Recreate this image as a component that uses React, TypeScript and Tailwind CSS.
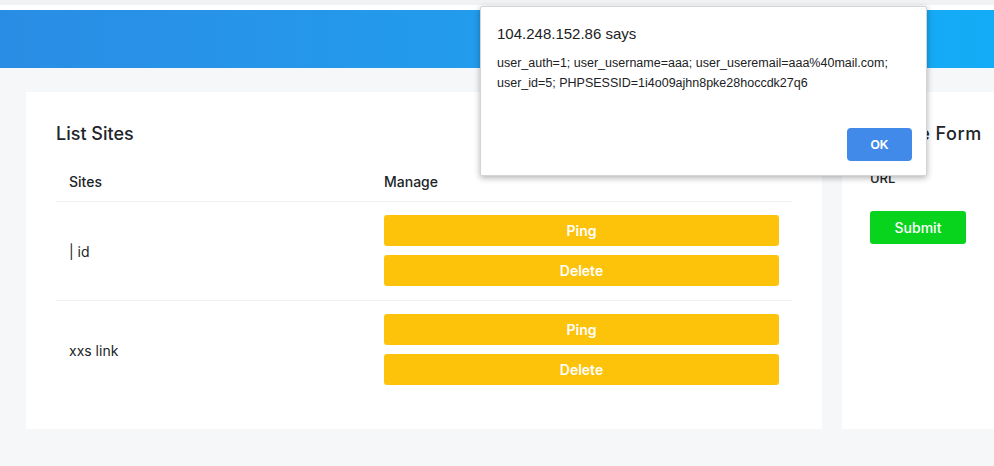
import React from "react";

const rows = [
  { name: "| id" },
  { name: "xxs link" },
];

export default function App() {
  return (
    <div className="relative h-[466px] w-[994px] overflow-hidden bg-[#f6f7f9] font-['Inter',sans-serif] text-[#212529]">

      {/* Top strip */}

      <div className="h-[5px] bg-[#f1f2f4]" />
      <div className="h-[5px] bg-white" />
      <div className="h-[58px] bg-gradient-to-r from-[#2a8de5] to-[#13acf6]" />

      {/* Content */}

      <div className="flex items-start gap-5 pl-[26px] pt-6">

        <div className="w-[796px] shrink-0 bg-white px-[30px] pb-[30px] pt-[30px]">

          <h2 className="text-[18px] font-medium leading-[24px] text-[#212529]">
            List Sites
          </h2>

          <div className="mt-[16px]">

            <div className="flex h-10 items-center border-b border-[#eef0f2] text-[14px] font-medium">
              <div className="w-[315px] pl-[13px]">Sites</div>
              <div className="pl-[13px]">Manage</div>
            </div>

            {rows.map((row, i) => (
              <div
                key={i}
                className={`flex items-center ${i === 0 ? "border-b border-[#eef0f2]" : ""}`}
              >
                <div className="w-[315px] pl-[13px] text-[14px]">{row.name}</div>
                <div className="flex flex-1 flex-col gap-[9px] px-[13px] pb-[14px] pt-[13px]">
                  <ActionButton label="Ping" />
                  <ActionButton label="Delete" />
                </div>
              </div>
            ))}

          </div>

        </div>

        <div className="h-[337px] w-[300px] shrink-0 bg-white px-[28px] pt-[30px]">

          <h2 className="text-[18px] font-medium leading-[24px] tracking-[0.5px]">
            Create Form
          </h2>

          <p className="mt-[23px] text-[13px] font-medium">URL</p>

          <button className="mt-[22px] h-[33px] w-[96px] rounded-[3px] bg-[#08d41e] text-[14px] font-medium text-white">
            Submit
          </button>

        </div>

      </div>

      {/* Alert dialog */}

      <div className="absolute left-[480px] top-[6px] h-[170px] w-[447px] rounded-[2px] border border-[#d4d4d4] bg-white shadow-[0_2px_6px_rgba(0,0,0,0.3)] font-['Liberation_Sans',sans-serif]">

        <p className="ml-[16px] mt-[17px] text-[15px] leading-[20px] text-[#202124]">
          104.248.152.86 says
        </p>

        <p className="ml-[16px] mt-[9px] w-[410px] text-[12.5px] leading-[20px] text-[#202124]">
          user_auth=1; user_username=aaa; user_useremail=aaa%40mail.com;
          user_id=5; PHPSESSID=1i4o09ajhn8pke28hoccdk27q6
        </p>

        <button className="absolute left-[366px] top-[121px] h-[33px] w-[65px] rounded-[4px] bg-[#418aea] text-[12px] font-bold text-white">
          OK
        </button>

      </div>

    </div>
  );
}

function ActionButton({ label }: { label: string }) {
  return (
    <button className="h-[31px] w-full rounded-[3px] bg-[#fdc20a] text-[14px] font-semibold text-white">
      {label}
    </button>
  );
}
